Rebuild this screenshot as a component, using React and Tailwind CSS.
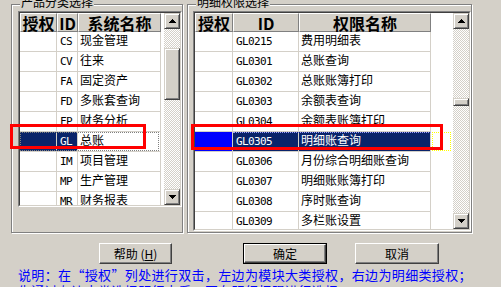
import React from 'react';

const leftRows = [
  ['CS', '现金管理'],
  ['CV', '往来'],
  ['FA', '固定资产'],
  ['FD', '多账套查询'],
  ['FP', '财务分析'],
  ['GL', '总账'],
  ['IM', '项目管理'],
  ['MP', '生产管理'],
  ['MR', '财务报表'],
];

const rightRows = [
  ['GL0215', '费用明细表'],
  ['GL0301', '总账查询'],
  ['GL0302', '总账账簿打印'],
  ['GL0303', '余额表查询'],
  ['GL0304', '余额表账簿打印'],
  ['GL0305', '明细账查询'],
  ['GL0306', '月份综合明细账查询'],
  ['GL0307', '明细账账簿打印'],
  ['GL0308', '序时账查询'],
  ['GL0309', '多栏账设置'],
];

function UpArrow() {
  return (
    <svg width="7" height="4" viewBox="0 0 7 4" shapeRendering="crispEdges">
      <path d="M3 0h1v1h1v1h1v1h1v1H0V3h1V2h1V1h1z" fill="#000" />
    </svg>
  );
}

function DownArrow() {
  return (
    <svg width="7" height="4" viewBox="0 0 7 4" shapeRendering="crispEdges">
      <path d="M0 0h7v1H6v1H5v1H4v1H3V3H2V2H1V1H0z" fill="#000" />
    </svg>
  );
}

function ScrollButton({ children }) {
  return (
    <div className="w-[16px] h-[16px] shrink-0 flex items-center justify-center bg-[#d4d0c8] border border-t-[#d4d0c8] border-l-[#d4d0c8] border-r-[#404040] border-b-[#404040] shadow-[inset_1px_1px_0_#ffffff,inset_-1px_-1px_0_#808080]">
      {children}
    </div>
  );
}

function ScrollBar({ thumbTop, thumbH }) {
  return (
    <div className="w-[16px] h-full flex flex-col shrink-0">
      <ScrollButton>
        <UpArrow />
      </ScrollButton>
      <div className="flex-1 bg-[repeating-conic-gradient(#ffffff_0%_25%,#d4d0c8_0%_50%)] bg-[length:2px_2px]">
        <div
          className={`w-[16px] bg-[#d4d0c8] border border-t-[#d4d0c8] border-l-[#d4d0c8] border-r-[#404040] border-b-[#404040] shadow-[inset_1px_1px_0_#ffffff,inset_-1px_-1px_0_#808080] ${thumbTop} ${thumbH}`}
        />
      </div>
      <ScrollButton>
        <DownArrow />
      </ScrollButton>
    </div>
  );
}

function HeaderCell({ w, children }) {
  return (
    <div
      className={`${w} h-[19px] shrink-0 flex items-center justify-center bg-[#d4d0c8] border border-t-white border-l-white border-r-[#808080] border-b-[#808080] text-[16px] font-bold leading-none text-black whitespace-nowrap`}
    >
      {children}
    </div>
  );
}

function GroupBox({ title, className, children }) {
  return (
    <div
      className={`relative border border-[#808080] shadow-[inset_1px_1px_0_#ffffff,1px_1px_0_#ffffff] ${className}`}
    >
      <span className="absolute -top-[10px] left-[8px] px-[1px] bg-[#d4d0c8] text-[12px] leading-[14px] text-black whitespace-nowrap">
        {title}
      </span>
      {children}
    </div>
  );
}

function LeftGrid() {
  return (
    <div className="w-[164px] h-[196px] border border-t-[#808080] border-l-[#808080] border-r-white border-b-white">
      <div className="flex h-full border border-t-[#404040] border-l-[#404040] border-r-[#d4d0c8] border-b-[#d4d0c8]">
        <div className="w-[144px] h-full bg-white overflow-hidden">
          <div className="flex">
            <HeaderCell w="w-[37px]">授权</HeaderCell>
            <HeaderCell w="w-[21px]">ID</HeaderCell>
            <HeaderCell w="w-[83px]">系统名称</HeaderCell>
          </div>
          {leftRows.map(([id, name], i) => {
            const sel = i === 5;
            return (
              <div key={id} className="relative flex h-[20px]">
                <div
                  className={`w-[37px] h-[20px] shrink-0 border-r border-b border-[#d4d0c8] ${sel ? 'bg-[#0a246a]' : 'bg-white'}`}
                />
                <div
                  className={`w-[21px] h-[20px] shrink-0 border-r border-b border-[#d4d0c8] pl-[3px] pt-[3px] font-['DejaVu_Sans_Mono',monospace] text-[11px] leading-[13px] tracking-[-0.6px] whitespace-nowrap overflow-hidden ${sel ? 'bg-[#0a246a] text-white' : 'bg-white text-black'}`}
                >
                  {id}
                </div>
                <div className="w-[83px] h-[20px] shrink-0 border-r border-b border-[#d4d0c8] pl-[2px] pt-[1px] text-[12px] leading-[14px] whitespace-nowrap overflow-hidden text-black">
                  {name}
                </div>
                {sel && (
                  <div className="absolute left-0 top-0 w-[139px] h-[19px] border border-dotted border-[#808080]" />
                )}
              </div>
            );
          })}
        </div>
        <ScrollBar thumbTop="mt-[19px]" thumbH="h-[52px]" />
      </div>
    </div>
  );
}

function RightGrid() {
  return (
    <div className="w-[278px] h-[220px] border border-t-[#808080] border-l-[#808080] border-r-white border-b-white">
      <div className="flex h-full border border-t-[#404040] border-l-[#404040] border-r-[#d4d0c8] border-b-[#d4d0c8]">
        <div className="w-[258px] h-full bg-white overflow-hidden">
          <div className="flex">
            <HeaderCell w="w-[38px]">授权</HeaderCell>
            <HeaderCell w="w-[66px]">ID</HeaderCell>
            <HeaderCell w="w-[132px]">权限名称</HeaderCell>
          </div>
          {rightRows.map(([id, name], i) => {
            const sel = i === 5;
            return (
              <div key={id} className="relative flex h-[20px]">
                <div
                  className={`w-[38px] h-[20px] shrink-0 border-r border-b border-[#d4d0c8] ${sel ? 'bg-[#0000ff]' : 'bg-white'}`}
                />
                <div
                  className={`w-[66px] h-[20px] shrink-0 border-r border-b border-[#d4d0c8] pl-[3px] pt-[3px] font-['DejaVu_Sans_Mono',monospace] text-[11px] leading-[13px] tracking-[-0.6px] whitespace-nowrap overflow-hidden ${sel ? 'bg-[#0a246a] text-white' : 'bg-white text-black'}`}
                >
                  {id}
                </div>
                <div
                  className={`w-[132px] h-[20px] shrink-0 border-r border-b border-[#d4d0c8] pl-[2px] pt-[1px] text-[12px] leading-[14px] whitespace-nowrap overflow-hidden ${sel ? 'bg-[#0a246a] text-white' : 'bg-white text-black'}`}
                >
                  {name}
                </div>
                {sel && (
                  <div className="w-[19px] h-[19px] ml-[1px] shrink-0 border border-dotted border-[#ffff00]" />
                )}
                {sel && (
                  <div className="absolute left-[38px] top-0 w-[198px] h-0 border-t border-dotted border-[#a0a0ff]" />
                )}
              </div>
            );
          })}
        </div>
        <ScrollBar thumbTop="mt-[69px]" thumbH="h-[8px]" />
      </div>
    </div>
  );
}

function WinButton({ w, children, isDefault }) {
  const inner = (
    <div
      className={`${w} h-full flex items-center justify-center bg-[#d4d0c8] border border-t-white border-l-white border-r-[#404040] border-b-[#404040] shadow-[inset_-1px_-1px_0_#808080] text-[12px] leading-none text-black whitespace-nowrap`}
    >
      {children}
    </div>
  );
  if (isDefault) {
    return <div className="h-[21px] border border-black flex">{inner}</div>;
  }
  return <div className="h-[21px] flex">{inner}</div>;
}

export default function App() {
  return (
    <div className="relative w-[501px] h-[287px] overflow-hidden bg-[#d4d0c8] font-['Noto_Sans_CJK_SC',sans-serif] text-black">
      <div className="flex gap-[4px] pl-[11px] pt-[4px]">
        <GroupBox title="产品分类选择" className="w-[172px] h-[229px] pl-[6px] pt-[6px]">
          <LeftGrid />
        </GroupBox>
        <GroupBox title="明细权限选择" className="w-[285px] h-[229px] pl-[5px] pt-[6px]">
          <RightGrid />
        </GroupBox>
      </div>

      <div className="flex items-start mt-[10px] pl-[99px]">
        <WinButton w="w-[73px]">
          帮助 (<span className="underline">H</span>)
        </WinButton>
        <div className="ml-[71px]">
          <WinButton w="w-[82px]" isDefault>
            确定
          </WinButton>
        </div>
        <div className="ml-[28px]">
          <WinButton w="w-[84px]">取消</WinButton>
        </div>
      </div>

      <div className="mt-[3px] pl-[18px] text-[13px] leading-[16px] tracking-[0.35px] text-[#0000ff] whitespace-nowrap">
        <div>说明：在“授权”列处进行双击，左边为模块大类授权，右边为明细类授权；</div>
        <div>先通过左边大类选择明细大后，再在明细权限进行选择。</div>
      </div>

      <div className="absolute left-[10px] top-[124px] w-[136px] h-[25px] border-[3px] border-[#ff0000]" />
      <div className="absolute left-[191px] top-[124px] w-[252px] h-[26px] border-[3px] border-[#ff0000]" />
    </div>
  );
}
